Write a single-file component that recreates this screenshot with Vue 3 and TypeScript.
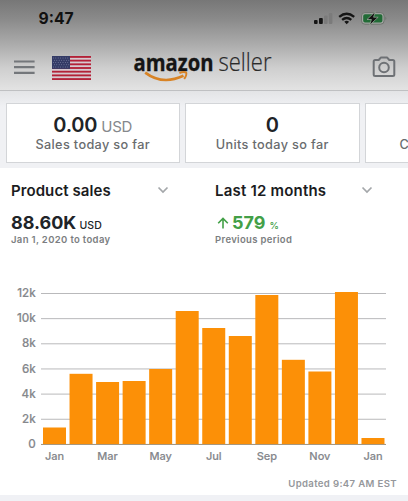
<script setup lang="ts">
interface Bar { top: number; label?: string }

const bars: Bar[] = [
  { top: 427.5, label: 'Jan' }, { top: 373.8 }, { top: 382, label: 'Mar' }, { top: 381 },
  { top: 369, label: 'May' }, { top: 311 }, { top: 328, label: 'Jul' }, { top: 336 },
  { top: 295, label: 'Sep' }, { top: 359.8 }, { top: 371.5, label: 'Nov' }, { top: 292 },
  { top: 438, label: 'Jan' },
]
const ticks = ['12k', '10k', '8k', '6k', '4k', '2k', '0']
const barX = (i: number) => 43 + i * 26.54
const tickY = (i: number) => 293.5 + i * 25.15
</script>

<template>
  <main class="screen">
    <header class="top">
      <div class="status">
        <span class="clock">9:47</span>
        <svg class="status-icons" width="76" height="16" viewBox="0 0 76 16">
          <g fill="#151515">
            <rect x="1" y="10" width="3.6" height="4" rx="1" />
            <rect x="6" y="8" width="3.8" height="6" rx="1" />
          </g>
          <g fill="#7b7b7b">
            <rect x="11" y="5.5" width="3.6" height="8.5" rx="1" />
            <rect x="15.8" y="3" width="3.6" height="11" rx="1" />
          </g>
          <g fill="none" stroke="#151515" stroke-width="2.3">
            <path d="M26.2 6.8Q33.7 0.6 41.2 6.8" />
            <path d="M29.1 9.9Q33.7 6 38.3 9.9" />
          </g>
          <path d="M31.3 11.7Q33.7 9.8 36.1 11.7L33.7 14.2Z" fill="#151515" />
          <rect x="48.5" y="2.6" width="22.6" height="11.6" rx="3.4" fill="#a3a6a3" stroke="#6f746f" />
          <rect x="50.2" y="4.2" width="19.2" height="8.4" rx="1.8" fill="#216b36" />
          <path d="M72.4 6.4Q74.3 8.2 72.4 10.2Z" fill="#6f746f" />
          <path d="M62.3 1.6L54 9.5h4.4l-1.8 5.700 8.600-8h-4.600z" fill="#111" stroke="#a3b2a4" stroke-width=".7" />
        </svg>
      </div>
      <nav class="nav">
        <svg class="menu" width="22" height="16" viewBox="0 0 22 16">
          <path d="M0 2.500h20.600M0 8.200h20.600M0 13.900h20.600" stroke="#74777b" stroke-width="2.2" />
        </svg>
        <svg class="flag" width="39" height="24" viewBox="0 0 39 24">
          <rect width="39" height="24" fill="#d6c9cf" />
          <rect v-for="n in 7" :key="n" x="0" :y="(n - 1) * 3.69" width="39" height="1.85" fill="#b32137" />
          <rect width="18" height="12.9" fill="#343b66" />
          <template v-for="r in 5" :key="r">
            <circle v-for="c in 7" :key="c" :cx="c * 2.4 - (r % 2 ? 1 : 0)" :cy="r * 2.3 - .4" r=".48" fill="#9097b5" />
          </template>
        </svg>
        <svg class="logo" width="150" height="42" viewBox="0 -6 150 42">
          <text x="0.500" y="23" class="brand" textLength="80" lengthAdjust="spacingAndGlyphs">amazon</text>
          <text x="85.500" y="23" class="product" textLength="53" lengthAdjust="spacingAndGlyphs">seller</text>
          <path d="M12.200 24.600C24 33.500 38 33.500 50.500 27.800" fill="none" stroke="#d88325" stroke-width="2.600" />
          <path d="M46.400 25.200Q50.500 23.300 53.200 24.600Q54 27 51.200 31" fill="none" stroke="#d88325" stroke-width="1.900" />
        </svg>
        <svg class="camera" width="24" height="22" viewBox="0 0 24 22">
          <path d="M3.2 4h3.5l2.1-2.4h6.4L17.3 4h3.5q1.5 0 1.5 1.5v13q0 1.5-1.5 1.5H3.2q-1.5 0-1.5-1.5v-13Q1.700 4 3.200 4z" fill="none" stroke="#6e7175" stroke-width="2" stroke-linejoin="round" />
          <circle cx="12" cy="11.500" r="4.800" fill="none" stroke="#6e7175" stroke-width="2" />
        </svg>
      </nav>
    </header>

    <section class="cards">
      <article class="card">
        <div class="amount">0.00 <span class="unit">USD</span></div>
        <div class="caption">Sales today so far</div>
      </article>
      <article class="card">
        <div class="amount">0</div>
        <div class="caption">Units today so far</div>
      </article>
      <article class="card last"><div class="caption">C</div></article>
    </section>

    <section class="summary">
      <div class="metric">
        <div class="select">
          <span>Product sales</span>
          <svg width="12" height="8" viewBox="0 0 12 8"><path d="M1.500 1.500L6 6l4.500-4.500" fill="none" stroke="#a4a7aa" stroke-width="1.700" /></svg>
        </div>
        <div class="value">88.60K <small>USD</small></div>
        <div class="note">Jan 1, 2020 to today</div>
      </div>
      <div class="metric">
        <div class="select range">
          <span>Last 12 months</span>
          <svg width="12" height="8" viewBox="0 0 12 8"><path d="M1.500 1.500L6 6l4.500-4.500" fill="none" stroke="#a4a7aa" stroke-width="1.700" /></svg>
        </div>
        <div class="value up">
          <svg width="12" height="12" viewBox="0 0 12 12"><path d="M6 11.500V1.500M1.200 6.200L6 1.400l4.800 4.800" fill="none" stroke="#43a047" stroke-width="1.600" /></svg>
          <span>579</span> <small>%</small>
        </div>
        <div class="note">Previous period</div>
      </div>
    </section>

    <svg class="chart" width="408" height="195" viewBox="0 275 408 195">
      <g v-for="(t, i) in ticks" :key="t">
        <line x1="41" x2="386" :y1="tickY(i)" :y2="tickY(i)" stroke="#b9b9bb" />
        <text class="tick" x="35.700" :y="tickY(i) + 3.600" text-anchor="end">{{ t }}</text>
      </g>
      <g v-for="(b, i) in bars" :key="i">
        <rect :x="barX(i)" :y="b.top" width="23" :height="444.300 - b.top" fill="#fc9007" />
        <text v-if="b.label" :x="barX(i) + 11.500" y="460" text-anchor="middle">{{ b.label }}</text>
      </g>
      <line x1="41" x2="386" y1="444.500" y2="444.500" stroke="#a7977e" />
    </svg>
    <footer class="updated">Updated 9:47 AM EST</footer>
    <div class="divider"></div>
  </main>
</template>

<style>
body { margin: 0; background: #fff; }
</style>

<style scoped>
.screen { width: 408px; height: 501px; overflow: hidden; background: #fff; font-family: Inter, "Liberation Sans", sans-serif; display: flex; flex-direction: column; }
svg { display: block; flex: none; }
.top { height: 91px; box-sizing: border-box; border-bottom: 1px solid #bfc0c2; background: linear-gradient(#777 0, #8b8b8b 22%, #aaa 48%, #cfcfcf 76%, #e3e3e3 100%); }
.status { height: 48px; box-sizing: border-box; padding: 10px 19px 0 38.5px; display: flex; justify-content: space-between; }
.clock { font-size: 15.7px; line-height: 18px; font-weight: 700; color: #111; }
.nav { display: flex; align-items: flex-start; }
.menu { margin: 11px 0 0 14px; }
.flag { margin: 8px 0 0 16px; }
.logo { margin: -6px 0 0 42px; overflow: visible; }
.brand { font: 700 24px "Open Sans", sans-serif; fill: #151515; stroke: #151515; stroke-width: .35px; }
.product { font: 300 26px "Open Sans", sans-serif; fill: #2a2a2a; stroke: #2a2a2a; stroke-width: .2px; }
.camera { margin: 8px 0 0 89px; }
.cards { height: 77px; box-sizing: border-box; padding: 12px 0 0 5.5px; background: linear-gradient(#e3e4e6, #f0f1f4 16px); display: flex; gap: 5px; }
.card { width: 174.5px; height: 60px; box-sizing: border-box; flex: none; border: 1px solid #d3d5d8; background: #fff; text-align: center; padding-top: 9px; }
.amount { height: 24px; font-size: 20px; line-height: 24px; font-weight: 600; color: #202327; letter-spacing: -.2px; }
.unit { font-size: 15px; line-height: 18px; font-weight: 400; color: #85888c; margin-left: -1px; }
.caption { font-size: 12.7px; line-height: 16px; font-weight: 500; color: #696c6e; letter-spacing: .35px; }
.card.last { text-align: left; padding: 33px 0 0 34px; }
.summary { height: 107px; display: flex; padding-left: 11px; }
.metric { width: 204px; flex: none; }
.select { height: 20px; margin-top: 12px; width: 158px; display: flex; align-items: center; justify-content: space-between; font-size: 15px; font-weight: 600; color: #1b1c1e; letter-spacing: .08px; }
.range { letter-spacing: .2px; }
.select svg { margin-top: -1px; }
.value { margin-top: 13px; height: 20px; line-height: 20px; font-size: 18px; font-weight: 700; color: #202428; white-space: nowrap; }
.value small { font-size: 10.5px; font-weight: 500; margin-left: -1px; }
.up { display: flex; align-items: baseline; color: #43a047; }
.up svg { margin: 0 3px 0 2px; }
.value.up small { margin-left: 4px; font-size: 9.5px; }
.note { font-size: 9.5px; line-height: 14px; font-weight: 600; color: #7b7e81; letter-spacing: .35px; }
.chart text { font: 500 11px Inter, sans-serif; fill: #85878c; stroke: #85878c; stroke-width: .15px; }
.chart .tick { font-size: 11.6px; }
.updated { height: 25px; box-sizing: border-box; padding: 7px 11px 0 0; text-align: right; font-size: 9.6px; line-height: 14px; font-weight: 600; color: #95979b; letter-spacing: .35px; }
.divider { height: 6px; background: #f0f1f5; }
</style>
